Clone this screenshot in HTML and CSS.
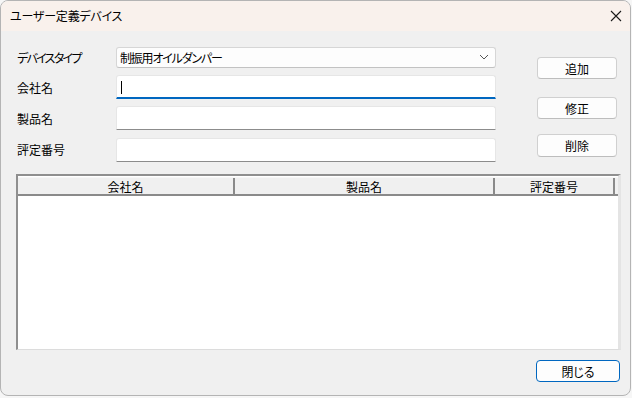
FILE: index.html
```html
<!DOCTYPE html>
<html lang="ja">
<head>
<meta charset="utf-8">
<title>ユーザー定義デバイス</title>
<link rel="stylesheet" href="styles.css">
</head>
<body>
<div class="window">
  <div class="titlebar">
    <span class="title">ユーザー定義デバイス</span>
    <svg class="close" width="12" height="12" viewBox="0 0 12 12"><path d="M1 1 L11 11 M11 1 L1 11" stroke="#1a1a1a" stroke-width="1.1" fill="none"/></svg>
  </div>
  <div class="content">
    <div class="top">
      <div class="form">
        <label class="lbl kana">デバイスタイプ</label>
        <div class="combo">
          <span class="combo-text">制振用オイルダンパー</span>
          <svg class="chev" width="10" height="6" viewBox="0 0 10 6"><path d="M1 1 L5 5 L9 1" stroke="#555" stroke-width="1" fill="none"/></svg>
        </div>
        <label class="lbl">会社名</label>
        <div class="input focused"><span class="caret"></span></div>
        <label class="lbl">製品名</label>
        <div class="input"></div>
        <label class="lbl">評定番号</label>
        <div class="input last"></div>
      </div>
      <div class="actions">
        <button class="btn b-add">追加</button>
        <button class="btn b-edit">修正</button>
        <button class="btn b-del">削除</button>
      </div>
    </div>
    <div class="list">
      <div class="header">
        <div class="col c1">会社名</div>
        <div class="col c2">製品名</div>
        <div class="col c3">評定番号</div>
        <div class="col c4"></div>
      </div>
      <div class="rows"></div>
    </div>
    <div class="footer">
      <button class="btn default">閉じる</button>
    </div>
  </div>
</div>
</body>
</html>
```

FILE: styles.css
```css
html, body {
  margin: 0;
  padding: 0;
}
body {
  width: 632px;
  height: 398px;
  background: #f6f6f6;
  font-family: "Noto Sans CJK JP", "Noto Sans", sans-serif;
  font-feature-settings: "palt";
  font-size: 12px;
  color: #000;
  overflow: hidden;
}
.window {
  width: 629px;
  height: 394px;
  border: 1px solid #b4b4b4;
  border-radius: 8px;
  overflow: hidden;
  background: #f0f0f0;
  display: flex;
  flex-direction: column;
}
.titlebar {
  height: 30px;
  background: #f9f1ec;
  display: flex;
  align-items: center;
  justify-content: space-between;
  padding: 0 8px 0 9px;
  flex: none;
}
.title {
  font-size: 12px;
  letter-spacing: -0.2px;
  line-height: 1;
}
.close {
  display: block;
}
.content {
  flex: 1;
  padding: 16px 10px 0 14px;
  display: flex;
  flex-direction: column;
}
.top {
  display: flex;
  align-items: flex-start;
}
.form {
  display: grid;
  grid-template-columns: 99px 380px;
  grid-template-rows: 21px 24px 24px 24px;
  row-gap: 7px;
  padding-left: 2px;
}
.form .last {
  margin-top: 1px;
}
.lbl {
  align-self: center;
  padding-top: 1px;
  font-size: 12px;
  line-height: 1;
}
.lbl.kana {
  letter-spacing: -1.7px;
}
.combo {
  box-sizing: border-box;
  height: 21px;
  background: #fdfdfd;
  border: 1px solid #d6d6d6;
  border-bottom-color: #c2c2c2;
  border-radius: 3px;
  display: flex;
  align-items: center;
  justify-content: space-between;
  padding: 0 6px 0 3px;
}
.combo-text {
  font-size: 12px;
  line-height: 1;
  padding-top: 1px;
  letter-spacing: -1.2px;
}
.chev {
  display: block;
  margin-bottom: 2px;
}
.input {
  box-sizing: border-box;
  height: 24px;
  background: #fff;
  border: 1px solid #e6e6e6;
  border-bottom: 1px solid #8c8c8c;
  border-radius: 3px 3px 0 0;
  display: flex;
  align-items: center;
  padding-left: 4px;
}
.input.focused {
  border-bottom: 2px solid #0067c0;
}
.caret {
  width: 1px;
  height: 13px;
  background: #000;
  margin-top: 1px;
}
.actions {
  margin-left: 41px;
  display: flex;
  flex-direction: column;
  padding-top: 10px;
}
.btn {
  box-sizing: border-box;
  width: 80px;
  height: 22px;
  background: #fdfdfd;
  border: 1px solid #d0d0d0;
  border-bottom-color: #bdbdbd;
  border-radius: 4px;
  font-family: inherit;
  font-feature-settings: "palt";
  font-size: 12px;
  line-height: 1;
  color: #000;
  padding: 1px 0 0 0;
  margin: 0;
}
.b-edit {
  margin-top: 18px;
}
.b-del {
  margin-top: 15px;
  height: 23px;
}
.list {
  margin-top: 13px;
  margin-left: 1px;
  width: 605px;
  height: 176px;
  box-sizing: border-box;
  border-top: 2px solid #8f8f8f;
  border-left: 2px solid #8f8f8f;
  border-right: 3px solid #e4e4e4;
  border-bottom: 1px solid #dcdcdc;
  background: #fff;
  display: flex;
  flex-direction: column;
}
.header {
  margin-top: 1px;
  height: 19px;
  box-sizing: border-box;
  display: flex;
  background: #f0f0f0;
  border-bottom: 2px solid #8a8a8a;
  border-top: 1px solid #f7f7f7;
}
.col {
  box-sizing: border-box;
  display: flex;
  align-items: center;
  justify-content: center;
  font-size: 12px;
  line-height: 1;
  border-right: 2px solid #8a8a8a;
  padding-top: 1px;
}
.c1 { width: 217px; }
.c2 { width: 260px; }
.c3 { width: 120px; }
.c4 { flex: 1; border-right: none; }
.rows {
  flex: 1;
}
.footer {
  display: flex;
  justify-content: flex-end;
  margin-top: 10px;
}
.btn.default {
  width: 84px;
  border: 1px solid #0067c0;
  border-radius: 4px;
}
```
